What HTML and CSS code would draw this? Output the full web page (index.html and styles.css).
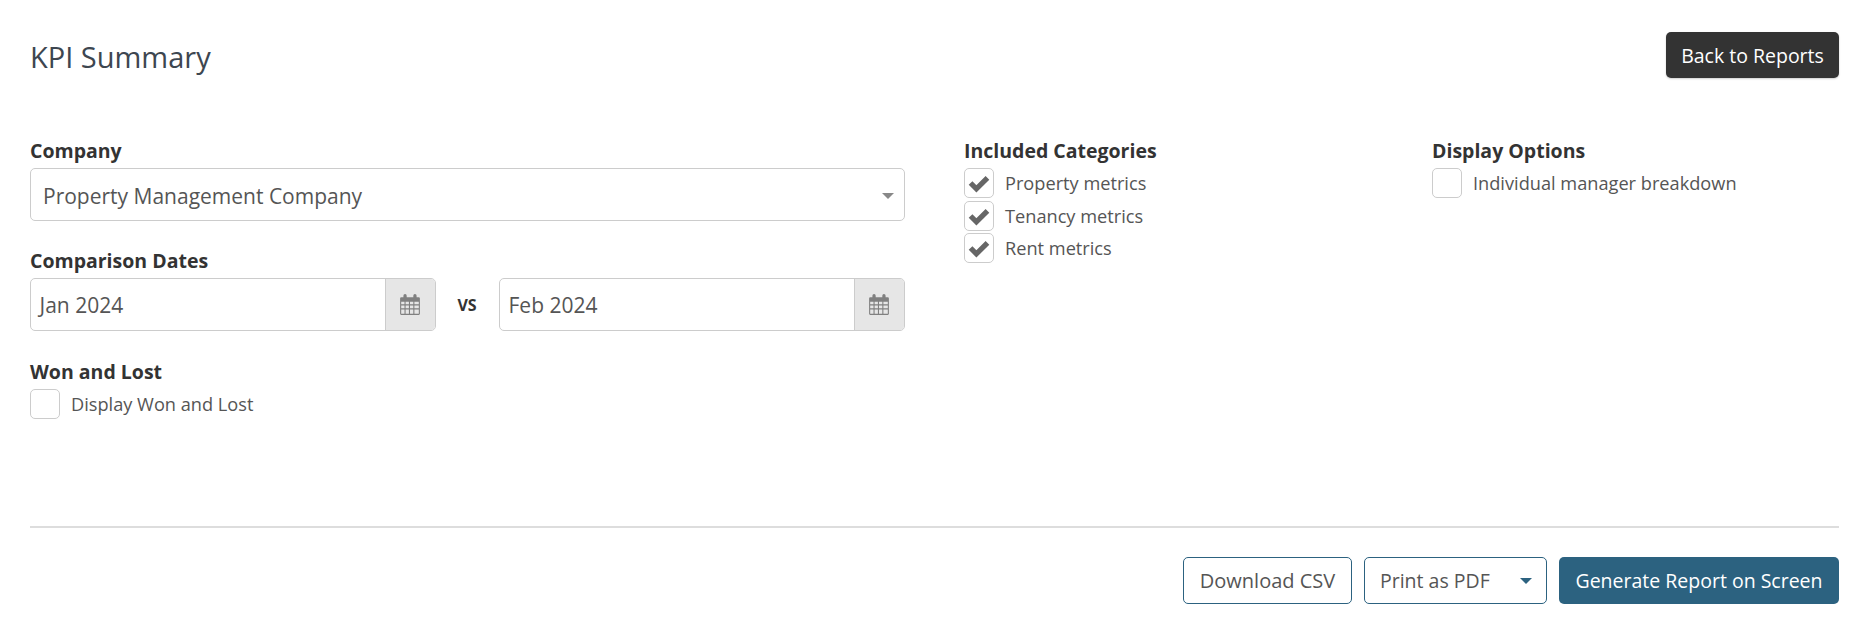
FILE: index.html
```html
<!DOCTYPE html>
<html lang="en">
<head>
<meta charset="utf-8">
<title>KPI Summary</title>
<link rel="stylesheet" href="styles.css">
</head>
<body>
<svg class="defs" width="0" height="0" aria-hidden="true">
  <symbol id="cal" viewBox="0 0 20 20">
    <path fill="currentColor" fill-rule="evenodd" d="M4 1.5a1.5 1.5 0 0 1 3 0V3h6V1.500a1.500 1.500 0 0 1 3 0V3h2a1 1 0 0 1 1 1v14a1 1 0 0 1-1 1H2a1 1 0 0 1-1-1V4a1 1 0 0 1 1-1h2zM2 7v2.400h3V7zm4 0v2.400h3V7zm4 0v2.400h3V7zm4 0v2.400h4V7zM2 10.400v2.600h3v-2.600zm4 0v2.600h3v-2.600zm4 0v2.600h3v-2.600zm4 0v2.600h4v-2.600zM2 14v4h3v-4zm4 0v4h3v-4zm4 0v4h3v-4zm4 0v4h4v-4z"/>
  </symbol>
  <symbol id="chk" viewBox="0 0 20 20">
    <path fill="none" stroke="currentColor" stroke-width="4" d="M3.500 10l4.500 4.500 8.500-8.500"/>
  </symbol>
</svg>
<main class="page">
  <header class="top">
    <h1 class="title">KPI Summary</h1>
    <a class="btn btn-dark">Back to Reports</a>
  </header>
  <section class="form">
    <div class="col-main">
      <div class="group">
        <div class="label">Company</div>
        <div class="select"><span>Property Management Company</span><i class="caret"></i></div>
      </div>
      <div class="group">
        <div class="label">Comparison Dates</div>
        <div class="dates">
          <div class="date"><span class="date-val">Jan 2024</span><span class="addon"><svg class="ico"><use href="#cal"/></svg></span></div>
          <span class="vs">VS</span>
          <div class="date"><span class="date-val">Feb 2024</span><span class="addon"><svg class="ico"><use href="#cal"/></svg></span></div>
        </div>
      </div>
      <div class="group">
        <div class="label">Won and Lost</div>
        <div class="checks">
          <div class="check"><span class="box"></span><span>Display Won and Lost</span></div>
        </div>
      </div>
    </div>
    <div class="col-cat">
      <div class="label">Included Categories</div>
      <div class="checks">
        <div class="check"><span class="box"><svg class="tick"><use href="#chk"/></svg></span><span>Property metrics</span></div>
        <div class="check"><span class="box"><svg class="tick"><use href="#chk"/></svg></span><span>Tenancy metrics</span></div>
        <div class="check"><span class="box"><svg class="tick"><use href="#chk"/></svg></span><span>Rent metrics</span></div>
      </div>
    </div>
    <div class="col-opt">
      <div class="label">Display Options</div>
      <div class="checks">
        <div class="check"><span class="box"></span><span>Individual manager breakdown</span></div>
      </div>
    </div>
  </section>
  <hr class="rule">
  <footer class="actions">
    <a class="btn btn-outline">Download CSV</a>
    <a class="btn btn-outline btn-print">Print as PDF<i class="caret caret-blue"></i></a>
    <a class="btn btn-primary">Generate Report on Screen</a>
  </footer>
</main>
</body>
</html>
```
FILE: styles.css
```css
* { box-sizing: border-box; }
html, body { margin: 0; background: #fff; }
body { font-family: "Open Sans", "Noto Sans", sans-serif; color: #333; font-size: 18px; }
.defs { position: absolute; }
.page { padding: 32px 24px 0 30px; }
.top { display: flex; justify-content: space-between; align-items: flex-start; height: 46px; }
.title { margin: 6px 0 0; font-size: 29px; font-weight: 400; line-height: 38px; color: #3d4650; }
.btn { display: inline-flex; align-items: center; justify-content: center; height: 47px; border-radius: 5px; font-size: 19.500px; white-space: nowrap; border: 1px solid transparent; }
.btn-dark { width: 173px; height: 46px; background: #333; color: #fff; box-shadow: 0 1px 2px rgba(0,0,0,.2); }
.form { display: flex; margin-top: 61px; height: 387px; }
.col-main { width: 875px; margin-right: 59px; }
.col-cat { width: 468px; }
.label { font-weight: 700; font-size: 19.500px; line-height: 24px; color: #333; }
.group { margin-bottom: 28px; }
.group:nth-child(2) { margin-bottom: 29px; }
.select { display: flex; align-items: center; justify-content: space-between; height: 53px; margin-top: 5px; padding: 2px 10px 0 12px; border: 1px solid #ccc; border-radius: 5px; font-size: 21px; color: #555; }
.caret { width: 0; height: 0; border-left: 6px solid transparent; border-right: 6px solid transparent; border-top: 6px solid #888; }
.dates { display: flex; align-items: center; margin-top: 5px; }
.date { flex: 0 0 406px; display: flex; height: 53px; border: 1px solid #ccc; border-radius: 5px; overflow: hidden; }
.date-val { flex: 1; align-self: center; padding-left: 8.500px; font-size: 21px; color: #555; }
.addon { flex: 0 0 50px; display: flex; align-items: center; justify-content: center; padding-right: 2px; background: #e6e6e6; border-left: 1px solid #ccc; color: #808080; }
.ico { width: 22px; height: 22px; }
.vs { flex: 1; text-align: center; padding-right: 1px; font-size: 16px; font-weight: 700; color: #333; }
.checks { padding-top: 4px; }
.check { display: flex; align-items: center; gap: 11px; height: 32.500px; font-size: 18.200px; color: #555; }
.box { display: flex; align-items: center; justify-content: center; flex: 0 0 30px; height: 30px; border: 1px solid #ccc; border-radius: 5px; background: #fff; color: #666; }
.tick { width: 26px; height: 26px; }
.rule { margin: 0; border: 0; border-top: 2px solid #ddd; }
.actions { display: flex; justify-content: flex-end; gap: 12px; margin-top: 29px; }
.btn-outline { border-color: #2c6280; color: #555; background: #fff; font-size: 20px; }
.btn-outline:first-child { width: 169px; }
.btn-print { width: 183px; justify-content: flex-start; padding-left: 15px; font-size: 19.500px; }
.caret-blue { margin-left: auto; margin-right: 14px; border-top-color: #2c6280; }
.btn-primary { width: 280px; background: #2c6280; color: #fff; }
```
